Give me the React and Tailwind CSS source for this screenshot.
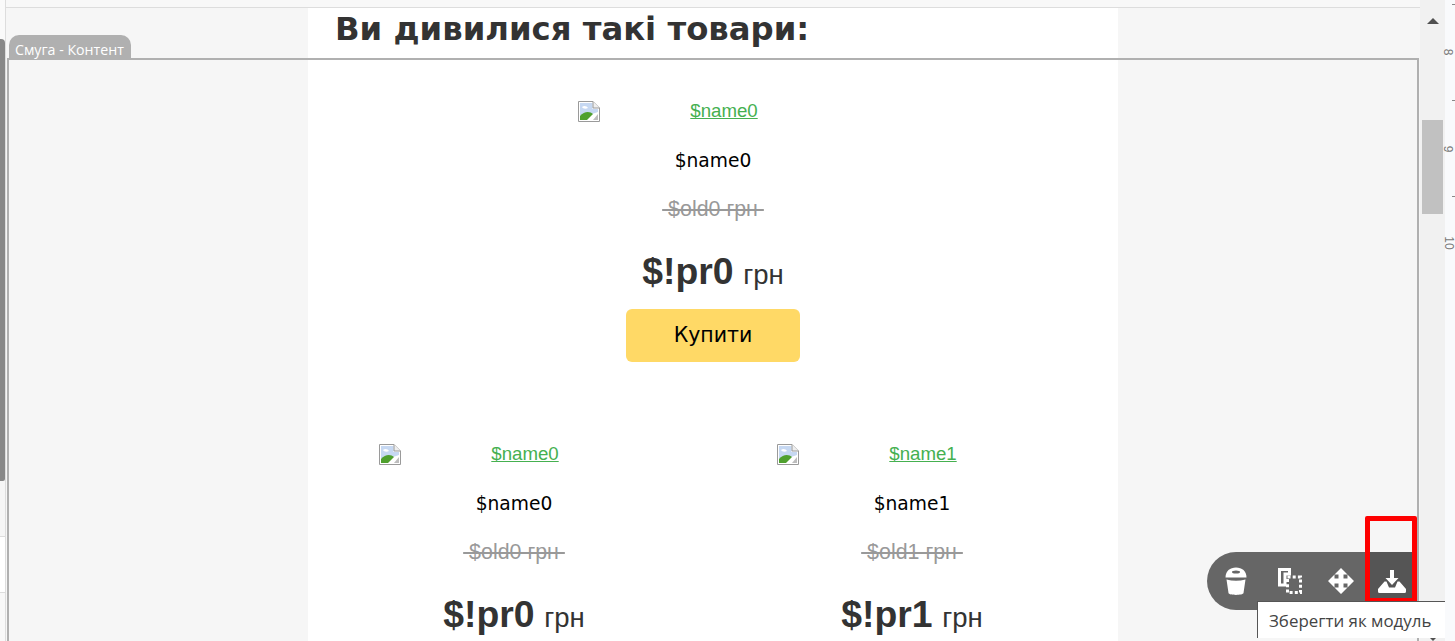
const sans = "font-['Liberation_Sans',Arial,sans-serif]"
const deja = "font-['DejaVu_Sans','Noto_Sans',sans-serif]"
const open = "font-['Open_Sans',sans-serif]"

function BrokenImage() {
  return (
    <svg width="22" height="21" viewBox="0 0 22 21" className="shrink-0">
      <path d="M0.5 0.5H15L21.5 7V20.5H0.5Z" fill="#fff" stroke="#9a9a9a" />
      <path d="M2 2H14.5V8H20V11L2 17Z" fill="#c6d8f2" />
      <path d="M4 6C6 4 9 5 10 7C8 8 5 8 4 6Z" fill="#fff" />
      <path d="M2 19V15C6 10 12 10 15 13L9 19Z" fill="#4fa02e" />
      <path d="M15 19L20 13V19Z" fill="#bdbdbd" />
      <path d="M15 0.5V7H21.5" fill="#efefef" stroke="#9a9a9a" />
    </svg>
  )
}

function Product({ name, old, price, children }) {
  return (
    <div className="flex flex-col items-center">
      <a className={`flex h-[20px] w-[270px] items-start text-[18.67px] leading-[20px] text-[#45b050] underline ${sans}`}>
        <BrokenImage />
        <span className="flex-1 text-center">{name}</span>
      </a>
      <div className={`mt-[29px] h-[22px] text-[18.67px] leading-[22px] text-black ${deja}`}>{name}</div>
      <div className={`mt-[27px] h-[20px] text-[21.4px] leading-[20px] whitespace-pre text-[#999] line-through ${sans}`}>
        {"\u00a0" + old + " грн\u00a0"}
      </div>
      <div className={`mt-[31px] h-[42px] leading-[42px] text-[#333] ${sans}`}>
        <span className="text-[37.33px] font-bold">{price}</span>
        <span className="ml-[2px] text-[27.5px]"> грн</span>
      </div>
      {children}
    </div>
  )
}

function Toolbar() {
  return (
    <div className="absolute left-[1207px] top-[552px] flex h-[58px] w-[208px] items-center rounded-l-[29px] bg-[#666] text-white">
      <div className="flex w-[163px] items-center">
        <svg width="22" height="28" viewBox="0 0 22 28" className="ml-[18px]">
          <path d="M0.5 10.5C0.5 4 5 0.5 11 0.5S21.5 4 21.5 10.5Z" fill="#fff" />
          <ellipse cx="11" cy="5" rx="4" ry="1.5" fill="#666" />
          <path d="M1.5 12.5Q11 15 20.5 12.5L18.5 26C18 28.5 4 28.5 3.5 26Z" fill="#fff" />
        </svg>
        <svg width="24" height="26" viewBox="0 0 24 26" className="ml-[31px]">
          <path d="M1.5 1.5H11.5V6H7V17H1.5Z" fill="none" stroke="#fff" strokeWidth="3" />
          <path d="M9.5 9H22.5V24.5H9.5Z" fill="none" stroke="#fff" strokeWidth="3" strokeDasharray="3 2.2" />
        </svg>
        <svg width="26" height="26" viewBox="0 0 26 26" className="ml-[26px]">
          <path d="M13 0L19.5 6.5H15.5V10.5H19.5V6.5L26 13L19.5 19.5V15.5H15.5V19.5H19.5L13 26L6.5 19.5H10.5V15.5H6.5V19.5L0 13L6.5 6.5V10.5H10.5V6.5H6.5Z" fill="#fff" />
        </svg>
      </div>
      <div className="flex h-full w-[45px] items-center justify-center bg-[#555]">
        <svg width="28" height="23" viewBox="0 0 28 23" className="-ml-px">
          <path d="M12 0H16V8H20.5L14 15L7.5 8H12Z" fill="#fff" />
          <path d="M6.5 11.5H8.5L11 17.5H17L19.5 11.5H21.5L28 19V21.5Q28 23 26.5 23H1.5Q0 23 0 21.5V19Z" fill="#fff" />
        </svg>
      </div>
    </div>
  )
}

export default function App() {
  return (
    <div className="relative flex h-[641px] w-[1455px] overflow-hidden bg-white">
      <aside className="flex w-[5px] shrink-0 flex-col bg-[#fafafa]">
        <div className="h-[39px]" />
        <div className="h-[442px] rounded-tr-[4px] rounded-br-[2px] bg-[#888]" />
        <div className="h-[56px] border-b border-[#ddd] bg-[#f6f6f6]" />
        <div className="h-[56px] border-b border-[#ddd] bg-white" />
        <div className="flex-1 bg-[#f8f8f8]" />
      </aside>

      <main className="flex h-full w-[1415px] shrink-0 flex-col overflow-hidden border-l border-[#ddd] bg-[#f6f6f6]">
        <div className="h-[8px] shrink-0 border-b border-[#ddd] bg-[#f8f8f8]" />
        <div className="ml-[302px] w-[810px] flex-1 bg-white">
          <h1 className={`ml-[27px] h-[43px] text-[32.3px] leading-[43px] font-bold text-[#333] ${deja}`}>
            Ви дивилися такі товари:
          </h1>
          <div className="mt-[50px] flex justify-center">
            <Product name="$name0" old="$old0" price="$!pr0">
              <button className={`mt-[17px] h-[53px] w-[174px] rounded-[6px] bg-[#ffd966] text-[20.5px] text-black ${deja}`}>
                Купити
              </button>
            </Product>
          </div>
          <div className="mt-[82px] grid grid-cols-2 px-[7px]">
            <Product name="$name0" old="$old0" price="$!pr0" />
            <Product name="$name1" old="$old1" price="$!pr1" />
          </div>
        </div>
      </main>

      <div className="relative h-full w-[25px] shrink-0 bg-[#f1f1f1]">
        <div className="absolute left-[2px] top-[120px] h-[94px] w-[21px] bg-[#c1c1c1]" />
        <div className="absolute left-[7px] top-[18px] h-0 w-0 border-x-[6px] border-b-[6px] border-x-transparent border-b-[#505050]" />
        <div className="absolute left-[7px] top-[635px] h-0 w-0 border-x-[6px] border-t-[6px] border-x-transparent border-t-[#505050]" />
      </div>

      <div className={`relative h-full w-[10px] shrink-0 bg-[#f9fafc] text-[12px] text-[#777] ${sans}`}>
        <div className="absolute right-0 top-[4px] h-px w-[3px] bg-[#888]" />
        <div className="absolute right-0 top-[100px] h-px w-[3px] bg-[#888]" />
        <div className="absolute right-0 top-[196px] h-px w-[3px] bg-[#888]" />
        <span className="absolute left-0 top-[46px] rotate-90 leading-none">8</span>
        <span className="absolute left-0 top-[143px] rotate-90 leading-none">9</span>
        <span className="absolute -left-[3px] top-[237px] rotate-90 leading-none">10</span>
      </div>

      {/* рамка смуги поверх контенту */}
      <div className="pointer-events-none absolute left-[7px] top-[58px] h-[600px] w-[1412px] border-2 border-[#b0b0b0]" />
      <div className={`absolute left-[9px] top-[35px] h-[24px] w-[122px] rounded-t-[10px] bg-[#b0b0b0] pl-[6px] pt-[6px] text-[14.2px] leading-[18px] text-white ${open}`}>
        Смуга - Контент
      </div>

      <Toolbar />
      <div className="pointer-events-none absolute left-[1365px] top-[516px] h-[87px] w-[52px] rounded-[2px] border-[5px] border-[#fe0000]" />
      <div className={`absolute left-[1257px] top-[601px] h-[37px] w-[188px] border-l border-t border-[#555] bg-white pl-[11px] pt-[8px] text-[16.9px] leading-[22px] text-[#444] ${open}`}>
        Зберегти як модуль
      </div>
    </div>
  )
}
